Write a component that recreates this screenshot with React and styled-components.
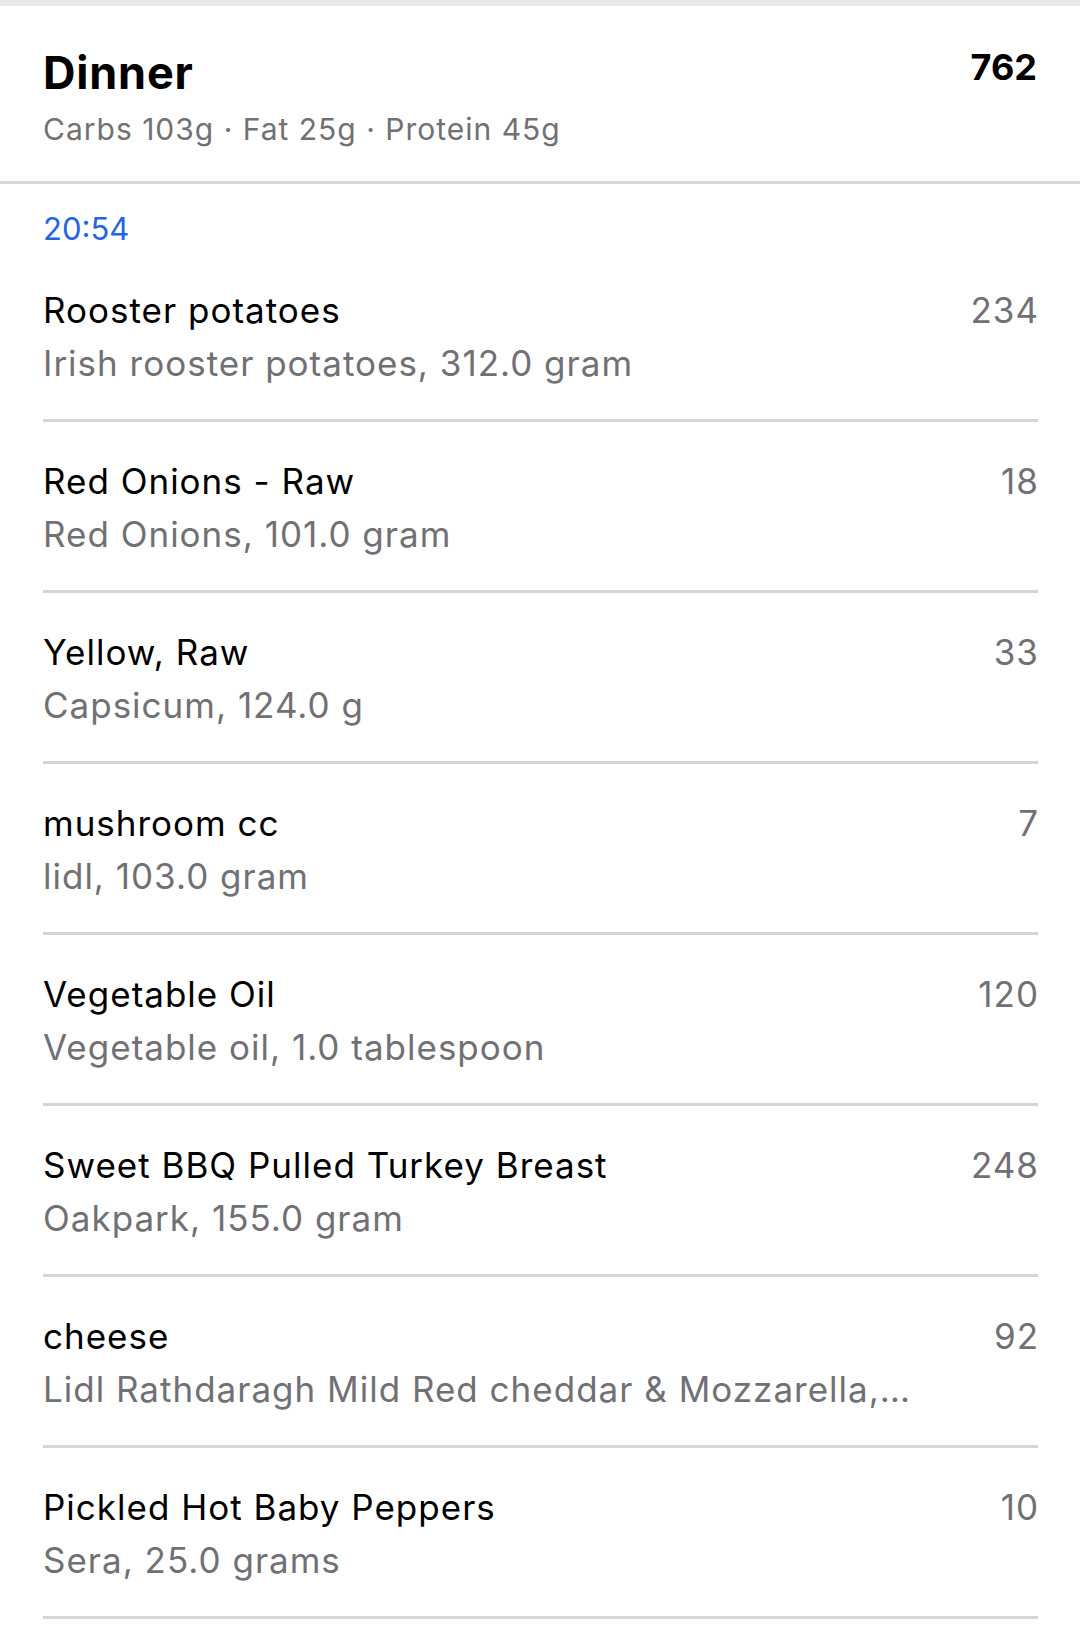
import styled, { createGlobalStyle } from "styled-components";

const meal = {
  name: "Dinner",
  calories: 762,
  macros: "Carbs 103g · Fat 25g · Protein 45g",
  time: "20:54",
  items: [
    { title: "Rooster potatoes", detail: "Irish rooster potatoes, 312.0 gram", kcal: 234 },
    { title: "Red Onions - Raw", detail: "Red Onions, 101.0 gram", kcal: 18 },
    { title: "Yellow, Raw", detail: "Capsicum, 124.0 g", kcal: 33 },
    { title: "mushroom cc", detail: "lidl, 103.0 gram", kcal: 7 },
    { title: "Vegetable Oil", detail: "Vegetable oil, 1.0 tablespoon", kcal: 120 },
    { title: "Sweet BBQ Pulled Turkey Breast", detail: "Oakpark, 155.0 gram", kcal: 248 },
    {
      title: "cheese",
      detail: "Lidl Rathdaragh Mild Red cheddar & Mozzarella, 40.0 gram",
      kcal: 92,
    },
    { title: "Pickled Hot Baby Peppers", detail: "Sera, 25.0 grams", kcal: 10 },
  ],
};

const GlobalStyle = createGlobalStyle`
  * {
    box-sizing: border-box;
  }
  html, body {
    margin: 0;
    padding: 0;
    background: #e8e8ed;
    font-family: Inter, "Noto Sans", sans-serif;
  }
`;

const App = () => {
  return (
    <>
      <GlobalStyle />
      <Page>
        <Card>
          <Header>
            <HeaderText>
              <MealName>{meal.name}</MealName>
              <Macros>{meal.macros}</Macros>
            </HeaderText>
            <Total>{meal.calories}</Total>
          </Header>
          <Entries>
            <Time>{meal.time}</Time>
            <List>
              {meal.items.map((item) => (
                <Row key={item.title}>
                  <Info>
                    <Title>{item.title}</Title>
                    <Detail>{item.detail}</Detail>
                  </Info>
                  <Kcal>{item.kcal}</Kcal>
                </Row>
              ))}
            </List>
          </Entries>
        </Card>
      </Page>
    </>
  );
};

export default App;

const Page = styled.div`
  padding-top: 6px;
  min-height: 100vh;
`;

const Card = styled.section`
  background: #ffffff;
  min-height: calc(100vh - 6px);
`;

const Header = styled.header`
  display: flex;
  justify-content: space-between;
  align-items: flex-start;
  padding: 40px 43px 32px;
  border-bottom: 3px solid #d6d6da;
`;

const HeaderText = styled.div`
  display: flex;
  flex-direction: column;
  gap: 9px;
`;

const MealName = styled.h1`
  margin: 0;
  font-size: 45px;
  line-height: 54px;
  font-weight: 700;
  letter-spacing: 0.8px;
  color: #000;
`;

const Macros = styled.span`
  font-size: 30px;
  line-height: 40px;
  letter-spacing: 1px;
  color: #707075;
`;

const Total = styled.span`
  font-size: 36px;
  line-height: 43px;
  font-weight: 700;
  color: #000;
`;

const Entries = styled.div`
  padding: 25px 42px 0 43px;
`;

const Time = styled.div`
  margin-bottom: 2px;
  font-size: 31px;
  line-height: 40px;
  color: #2563e6;
`;

const List = styled.ul`
  list-style: none;
  margin: 0;
  padding: 0;
`;

const Row = styled.li`
  display: flex;
  justify-content: space-between;
  gap: 21px;
  padding: 33px 0 29px;
  border-bottom: 3px solid #d6d6da;
`;

const Info = styled.div`
  flex: 1;
  min-width: 0;
  display: flex;
  flex-direction: column;
`;

const Title = styled.span`
  font-size: 35px;
  line-height: 53px;
  letter-spacing: 1px;
  color: #000;
`;

const Detail = styled.span`
  font-size: 35px;
  line-height: 53px;
  letter-spacing: 1px;
  color: #707075;
  white-space: nowrap;
  overflow: hidden;
  text-overflow: ellipsis;
`;

const Kcal = styled.span`
  min-width: 100px;
  margin-right: -1px;
  text-align: right;
  font-size: 35px;
  line-height: 53px;
  letter-spacing: 1px;
  color: #707075;
`;
